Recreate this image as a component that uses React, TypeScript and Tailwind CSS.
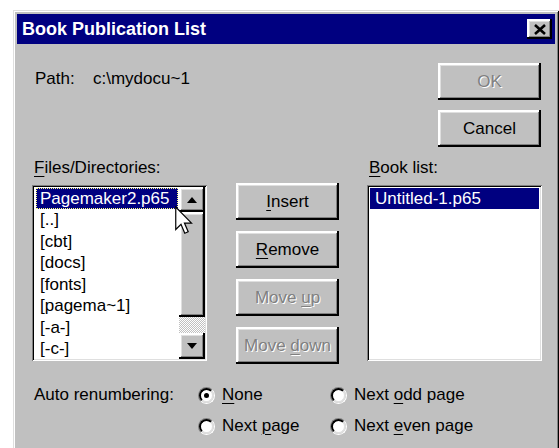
import React from "react";

// Win95-style 3D edges, drawn with stacked inset shadows
const raised =
  "shadow-[inset_-2px_-2px_0_#000,inset_2px_2px_0_#fff,inset_-3px_-3px_0_#808080,inset_3px_3px_0_#dfdfdf]";
const sunken =
  "shadow-[inset_1px_1px_0_#808080,inset_-1px_-1px_0_#fff,inset_2px_2px_0_#000,inset_-2px_-2px_0_#dfdfdf]";

const Key = ({ k }: { k: string }) => (
  <span className="underline decoration-1 underline-offset-[3px]">{k}</span>
);

type BtnProps = {
  children: React.ReactNode;
  disabled?: boolean;
};

const Button = ({ children, disabled }: BtnProps) => (
  <button
    type="button"
    className={
      disabled
        ? `${raised} flex h-[37px] w-[103px] items-center justify-center bg-[#c0c0c0] text-[17px] leading-[20px] text-[#808080] [text-shadow:1px_1px_0_#fff]`
        : `${raised} flex h-[37px] w-[103px] items-center justify-center bg-[#c0c0c0] text-[17px] leading-[20px] text-black`
    }
  >
    {children}
  </button>
);

const Arrow = ({ up }: { up?: boolean }) => (
  <svg width="10" height="6" viewBox="0 0 10 6">
    <path d={up ? "M5 0 L10 6 L0 6 Z" : "M0 0 L10 0 L5 6 Z"} fill="#000" />
  </svg>
);

const ScrollBar = () => (
  <div className="flex w-[26px] flex-col">
    <div className={`${raised} flex h-[25px] items-center justify-center bg-[#c0c0c0]`}>
      <Arrow up />
    </div>
    <div className={`${raised} h-[105px] bg-[#c0c0c0]`} />
    <div className="h-[16px] bg-[#dfdfdf] bg-[image:repeating-conic-gradient(#c0c0c0_0_25%,#fff_0_50%)] bg-[length:2px_2px]" />
    <div className={`${raised} flex flex-1 items-center justify-center bg-[#c0c0c0]`}>
      <Arrow />
    </div>
  </div>
);

const Radio = ({ checked, children }: { checked?: boolean; children: React.ReactNode }) => (
  <div className="flex items-center gap-[7px]">
    <div className="flex h-[17px] w-[17px] rounded-full border border-t-[#808080] border-l-[#808080] border-r-white border-b-white">
      <div className="flex flex-1 items-center justify-center rounded-full border-2 border-t-black border-l-black border-r-[#dfdfdf] border-b-[#dfdfdf] bg-white">
        {checked && <div className="h-[5px] w-[5px] rounded-full bg-black" />}
      </div>
    </div>
    <span className="leading-[20px]">{children}</span>
  </div>
);

const files = ["[..]", "[cbt]", "[docs]", "[fonts]", "[pagema~1]", "[-a-]", "[-c-]"];

const Cursor = () => (
  <svg
    className="absolute left-[143px] top-[21px]"
    width="18"
    height="29"
    viewBox="0 0 12 19"
  >
    <path
      d="M0.5 0.5 L0.5 15.5 L4 12 L6.5 18 L8.8 17 L6.3 11.2 L11 11.2 Z"
      fill="#fff"
      stroke="#000"
      strokeWidth="0.8"
      strokeLinejoin="miter"
    />
  </svg>
);

export default function App() {
  return (
    <div className="h-[448px] w-[559px] overflow-hidden bg-white pl-[13px] pt-[10px] font-['Liberation_Sans',Arial,sans-serif] text-[17px] text-black">
      <div className="w-[546px] bg-[#c0c0c0] p-[4px] pb-[40px] shadow-[inset_1px_1px_0_#dfdfdf,inset_-1px_-1px_0_#000,inset_2px_2px_0_#fff,inset_-2px_-2px_0_#808080]">
        {/* title bar */}
        <div className="flex h-[30px] items-center justify-between bg-[#000080] pl-[5px] pr-[3px]">
          <span className="text-[18px] font-bold leading-[30px] text-white">
            Book Publication List
          </span>
          <button
            type="button"
            className={`${raised} flex h-[20px] w-[25px] items-center justify-center bg-[#c0c0c0]`}
          >
            <svg width="12" height="11" viewBox="0 0 12 11">
              <path d="M1 1 L11 10 M11 1 L1 10" stroke="#000" strokeWidth="2.6" />
            </svg>
          </button>
        </div>

        {/* path + OK / Cancel */}
        <div className="flex pr-[14px] pt-[19px]">
          <div className="flex-1 pl-[18px] pt-[6px] leading-[20px]">
            <span className="inline-block w-[58px]">Path:</span>c:\mydocu~1
          </div>
          <div className="flex flex-col gap-[10px]">
            <Button disabled>OK</Button>
            <Button>Cancel</Button>
          </div>
        </div>

        {/* lists and move buttons */}
        <div className="mt-[11px] flex pl-[15px]">
          <div className="flex w-[175px] flex-col">
            <div className="pl-[2px] leading-[20px]">
              <Key k="F" />
              iles/Directories:
            </div>
            <div className={`${sunken} relative mt-[7px] flex h-[176px] bg-white p-[2px]`}>
              <div className="flex-1 overflow-hidden pl-[2px] pr-[1px] pt-[1px]">
                <div className="h-[21px] bg-[#000080] pl-[4px] leading-[21px] text-white outline-1 -outline-offset-1 outline-dotted outline-[#ffff80]">
                  Pagemaker2.p65
                </div>
                {files.map((f) => (
                  <div key={f} className="h-[21.5px] whitespace-nowrap pl-[4px] leading-[21.5px]">
                    {f}
                  </div>
                ))}
              </div>
              <ScrollBar />
              <Cursor />
            </div>
          </div>

          <div className="ml-[29px] flex flex-col gap-[11px] pt-[25px]">
            <Button>
              <Key k="I" />
              nsert
            </Button>
            <Button>
              <Key k="R" />
              emove
            </Button>
            <Button disabled>
              Move&nbsp;<Key k="u" />p
            </Button>
            <Button disabled>
              Move&nbsp;<Key k="d" />own
            </Button>
          </div>

          <div className="ml-[28px] flex w-[175px] flex-col">
            <div className="pl-[2px] leading-[20px]">
              <Key k="B" />
              ook list:
            </div>
            <div className={`${sunken} mt-[7px] h-[176px] bg-white p-[2px]`}>
              <div className="px-[1px] pt-[1px]">
                <div className="h-[21px] bg-[#000080] pl-[5px] leading-[21px] text-white">
                  Untitled-1.p65
                </div>
              </div>
            </div>
          </div>
        </div>

        {/* renumbering options */}
        <div className="mt-[21px] grid grid-cols-[164px_132px_auto] gap-y-[11px] pl-[17px]">
          <span className="leading-[20px]">Auto renumbering:</span>
          <Radio checked>
            <Key k="N" />
            one
          </Radio>
          <Radio>
            Next <Key k="o" />
            dd page
          </Radio>
          <span />
          <Radio>
            Next <Key k="p" />
            age
          </Radio>
          <Radio>
            Next <Key k="e" />
            ven page
          </Radio>
        </div>
      </div>
    </div>
  );
}
